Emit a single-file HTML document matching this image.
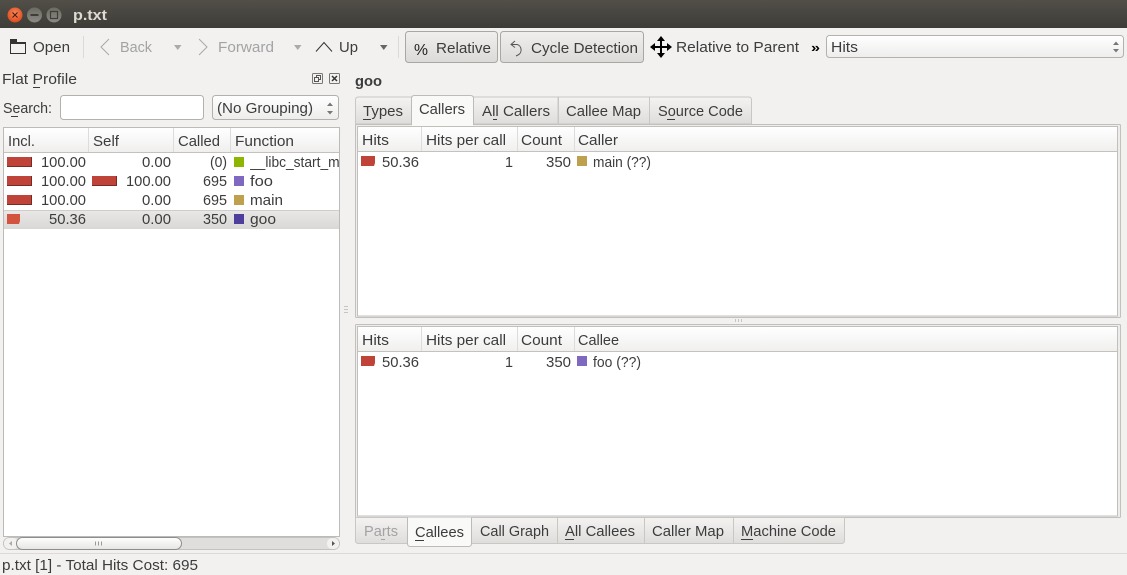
<!DOCTYPE html>
<html><head><meta charset="utf-8"><title>p.txt</title>
<style>
html,body{margin:0;padding:0;width:1127px;height:575px;overflow:hidden;background:#f2f1f0}
svg{display:block}
text{font-family:"Liberation Sans",sans-serif;font-size:15px;fill:#3c3c3c}
.g{fill:#a3a3a3}
.u{fill:#3c3c3c}
</style></head><body>
<svg width="1127" height="575" viewBox="0 0 1127 575" xmlns="http://www.w3.org/2000/svg">
<defs>
<linearGradient id="tb" x1="0" y1="0" x2="0" y2="1"><stop offset="0" stop-color="#514f48"/><stop offset="1" stop-color="#3d3c37"/></linearGradient>
<linearGradient id="hd" x1="0" y1="0" x2="0" y2="1"><stop offset="0" stop-color="#ffffff"/><stop offset="1" stop-color="#f0efee"/></linearGradient>
<linearGradient id="tab" x1="0" y1="0" x2="0" y2="1"><stop offset="0" stop-color="#f4f3f2"/><stop offset="1" stop-color="#dfdddb"/></linearGradient>
<linearGradient id="btn" x1="0" y1="0" x2="0" y2="1"><stop offset="0" stop-color="#f0efee"/><stop offset="1" stop-color="#dcdad8"/></linearGradient>
<linearGradient id="sel" x1="0" y1="0" x2="0" y2="1"><stop offset="0" stop-color="#e9e8e7"/><stop offset="1" stop-color="#d9d8d7"/></linearGradient>
<linearGradient id="thumb" x1="0" y1="0" x2="0" y2="1"><stop offset="0" stop-color="#ffffff"/><stop offset="1" stop-color="#e6e5e3"/></linearGradient>
<linearGradient id="cb" x1="0" y1="0" x2="0" y2="1"><stop offset="0" stop-color="#ffffff"/><stop offset="1" stop-color="#eeedec"/></linearGradient>
<linearGradient id="wb" x1="0" y1="0" x2="0" y2="1"><stop offset="0" stop-color="#6b6a63"/><stop offset="1" stop-color="#8c8b83"/></linearGradient>
<radialGradient id="cl" cx=".5" cy=".4" r=".6"><stop offset="0" stop-color="#f58a5e"/><stop offset="1" stop-color="#df4a1c"/></radialGradient>
</defs>

<!-- title bar -->
<rect x="0" y="0" width="1127" height="28" fill="url(#tb)"/>
<circle cx="15" cy="15" r="7.500" fill="url(#cl)"/>
<path d="M12.500 12.500l5 5M17.500 12.500l-5 5" stroke="#4a1d0c" stroke-width="1.100"/>
<circle cx="34.500" cy="15" r="7.500" fill="url(#wb)"/>
<rect x="30.500" y="14" width="8" height="2" fill="#3e3d38"/>
<circle cx="54" cy="15" r="7.500" fill="url(#wb)"/>
<rect x="50.500" y="11.500" width="7" height="7" fill="none" stroke="#3e3d38" stroke-width="1.200"/>
<text x="73" y="20" textLength="34" lengthAdjust="spacingAndGlyphs" style="fill:#dfdbd2;font-weight:bold">p.txt</text>

<!-- toolbar -->
<path d="M10.500 42.500v11h15v-11z" fill="none" stroke="#333" stroke-width="1"/>
<rect x="10" y="39" width="7" height="4" fill="#333"/>
<rect x="10" y="42" width="16" height="2" fill="#333"/>
<text x="33" y="52" textLength="37" lengthAdjust="spacingAndGlyphs">Open</text>
<rect x="83" y="36" width="1" height="22" fill="#dcdad7"/>
<path d="M109 39l-8 8 8 8" fill="none" stroke="#a8a8a8" stroke-width="1"/>
<text class="g" x="120" y="52" textLength="32" lengthAdjust="spacingAndGlyphs">Back</text>
<path d="M174 45h7.500l-3.750 5z" fill="#aaa"/>
<path d="M199 39l8 8-8 8" fill="none" stroke="#a8a8a8" stroke-width="1"/>
<text class="g" x="218" y="52" textLength="56" lengthAdjust="spacingAndGlyphs">Forward</text>
<path d="M294 45h7.500l-3.750 5z" fill="#aaa"/>
<path d="M316 51.500l8-9 8 9" fill="none" stroke="#333" stroke-width="1"/>
<text x="339" y="52" textLength="19" lengthAdjust="spacingAndGlyphs">Up</text>
<path d="M380 45h7.500l-3.750 5z" fill="#666"/>
<rect x="398" y="36" width="1" height="22" fill="#dcdad7"/>

<rect x="405.500" y="31.500" width="92" height="31" rx="3" fill="url(#btn)" stroke="#a9a7a3"/>
<text x="414" y="55" textLength="14" lengthAdjust="spacingAndGlyphs" style="fill:#222;font-size:16px">%</text>
<text x="436" y="53" textLength="55" lengthAdjust="spacingAndGlyphs">Relative</text>
<rect x="500.500" y="31.500" width="143" height="31" rx="3" fill="url(#btn)" stroke="#a9a7a3"/>
<path d="M515 41l-4 3.500 4 3M511.500 44.500h5.500a5 5.500 0 0 1 1 10.500l-2 1" fill="none" stroke="#555" stroke-width="1"/>
<text x="531" y="53" textLength="107" lengthAdjust="spacingAndGlyphs">Cycle Detection</text>

<path d="M661 40v14M654 47h14" stroke="#000" stroke-width="2"/>
<path d="M661 36l-4 5h8zM661 58l-4-5h8zM650 47l5-4v8zM672 47l-5-4v8z" fill="#000"/>
<text x="676" y="52" textLength="123" lengthAdjust="spacingAndGlyphs">Relative to Parent</text>
<text x="811" y="52" textLength="9" lengthAdjust="spacingAndGlyphs" style="fill:#000;font-weight:bold;font-size:13px">»</text>
<rect x="826.500" y="35.500" width="297" height="22" rx="3" fill="url(#cb)" stroke="#b3b1ad"/>
<text x="831" y="52" textLength="27" lengthAdjust="spacingAndGlyphs">Hits</text>
<path d="M1113 45l3-3.500 3 3.500zM1113 49l3 3.500 3-3.500z" fill="#777"/>

<!-- left dock -->
<text x="2" y="84" textLength="75" lengthAdjust="spacingAndGlyphs">Flat Profile</text>
<rect x="33" y="87" width="7" height="1" class="u"/>
<rect x="312.500" y="73.500" width="10" height="10" rx="1" fill="none" stroke="#777"/>
<path d="M316.500 77.500v-2h4v4h-2M314.500 77.500h4v4h-4z" fill="none" stroke="#555"/>
<rect x="329.500" y="73.500" width="10" height="10" rx="1" fill="none" stroke="#777"/>
<path d="M332 76l5 5M337 76l-5 5" stroke="#333" stroke-width="1.500"/>

<text x="3" y="113" textLength="49" lengthAdjust="spacingAndGlyphs">Search:</text>
<rect x="11" y="116" width="7" height="1" class="u"/>
<rect x="60.500" y="95.500" width="143" height="24" rx="3" fill="#fff" stroke="#b3b1ad"/>
<rect x="212.500" y="95.500" width="126" height="24" rx="3" fill="url(#cb)" stroke="#b3b1ad"/>
<text x="217" y="113" textLength="96" lengthAdjust="spacingAndGlyphs">(No Grouping)</text>
<path d="M327 106l3-3.500 3 3.500zM327 111l3 3.500 3-3.500z" fill="#777"/>

<!-- flat profile tree -->
<rect x="3.500" y="127.500" width="336" height="409" fill="#fff" stroke="#bdbbb7"/>
<rect x="4" y="128" width="335" height="24" fill="url(#hd)"/>
<rect x="4" y="152" width="335" height="1" fill="#c4c2be"/>
<rect x="88" y="128" width="1" height="24" fill="#dedcd9"/>
<rect x="173" y="128" width="1" height="24" fill="#dedcd9"/>
<rect x="230" y="128" width="1" height="24" fill="#dedcd9"/>
<text x="8" y="146" textLength="27" lengthAdjust="spacingAndGlyphs">Incl.</text>
<text x="93" y="146" textLength="26" lengthAdjust="spacingAndGlyphs">Self</text>
<text x="178" y="146" textLength="42" lengthAdjust="spacingAndGlyphs">Called</text>
<text x="235" y="146" textLength="59" lengthAdjust="spacingAndGlyphs">Function</text>

<rect x="4" y="210" width="335" height="19" fill="url(#sel)"/>
<rect x="4" y="210" width="335" height="1" fill="#cfcdcb"/>

<!-- bars -->
<g fill="#c0433a">
<rect x="7" y="157" width="25" height="10"/>
<rect x="7" y="176" width="25" height="10"/>
<rect x="92" y="176" width="25" height="10"/>
<rect x="7" y="195" width="25" height="10"/>
</g>
<g fill="#7a2a24">
<rect x="7" y="166" width="25" height="1"/><rect x="31" y="157" width="1" height="10"/>
<rect x="7" y="185" width="25" height="1"/><rect x="31" y="176" width="1" height="10"/>
<rect x="92" y="185" width="25" height="1"/><rect x="116" y="176" width="1" height="10"/>
<rect x="7" y="204" width="25" height="1"/><rect x="31" y="195" width="1" height="10"/>
</g>
<path d="M7 214h13v7l-1 3h-12z" fill="#d4533e"/>

<text x="41" y="167" textLength="45" lengthAdjust="spacingAndGlyphs">100.00</text>
<text x="142" y="167" textLength="29" lengthAdjust="spacingAndGlyphs">0.00</text>
<text x="210" y="167" textLength="17" lengthAdjust="spacingAndGlyphs" style="font-size:15px">(0)</text>
<rect x="234" y="157" width="10" height="10" fill="#8db600"/>
<svg x="250" y="150" width="89" height="24"><text x="0" y="17" textLength="108" lengthAdjust="spacingAndGlyphs">__libc_start_main</text></svg>

<text x="41" y="186" textLength="45" lengthAdjust="spacingAndGlyphs">100.00</text>
<text x="126" y="186" textLength="45" lengthAdjust="spacingAndGlyphs">100.00</text>
<text x="203" y="186" textLength="24" lengthAdjust="spacingAndGlyphs">695</text>
<rect x="234" y="176" width="10" height="10" fill="#7f68c0"/>
<text x="250" y="186" textLength="23" lengthAdjust="spacingAndGlyphs">foo</text>

<text x="41" y="205" textLength="45" lengthAdjust="spacingAndGlyphs">100.00</text>
<text x="142" y="205" textLength="29" lengthAdjust="spacingAndGlyphs">0.00</text>
<text x="203" y="205" textLength="24" lengthAdjust="spacingAndGlyphs">695</text>
<rect x="234" y="195" width="10" height="10" fill="#bfa04e"/>
<text x="250" y="205" textLength="33" lengthAdjust="spacingAndGlyphs">main</text>

<text x="49" y="224" textLength="37" lengthAdjust="spacingAndGlyphs">50.36</text>
<text x="142" y="224" textLength="29" lengthAdjust="spacingAndGlyphs">0.00</text>
<text x="203" y="224" textLength="24" lengthAdjust="spacingAndGlyphs">350</text>
<rect x="234" y="214" width="10" height="10" fill="#4f3f9c"/>
<text x="250" y="224" textLength="26" lengthAdjust="spacingAndGlyphs">goo</text>

<!-- horizontal scrollbar -->
<rect x="3.500" y="537.500" width="336" height="12" rx="6" fill="#dfdedc" stroke="#c4c2bf"/>
<rect x="327" y="538" width="12" height="11" rx="5" fill="#f2f1f0"/>
<rect x="4" y="538" width="14" height="11" rx="5" fill="#f2f1f0"/>
<rect x="16.500" y="537.500" width="165" height="12" rx="6" fill="url(#thumb)" stroke="#8f8d89"/>
<path d="M12 541v5l-3-2.500z" fill="#aaa"/>
<path d="M332 541v5l3-2.500z" fill="#555"/>
<path d="M95.500 541.500v4M98.500 541.500v4M101.500 541.500v4" stroke="#999"/>

<!-- splitter dots -->
<path d="M344 306.500h4M344 309.500h4M344 312.500h4" stroke="#c6c4c1"/>
<path d="M735.500 319v3M738.500 319v3M741.500 319v3" stroke="#c6c4c1"/>

<!-- right -->
<text x="355" y="86" textLength="27" lengthAdjust="spacingAndGlyphs" style="font-weight:bold">goo</text>

<!-- top tabs -->
<path d="M355.500 124v-24q0-3 3-3h53v27zM473.500 124v-27h84.500v27zM558.500 124v-27h91v27zM649.500 124v-27h99q3 0 3 3v24z" fill="url(#tab)" stroke="#c9c7c3"/>
<text x="363" y="116" textLength="40" lengthAdjust="spacingAndGlyphs">Types</text>
<rect x="363" y="119" width="8" height="1" class="u"/>
<text x="482" y="116" textLength="68" lengthAdjust="spacingAndGlyphs">All Callers</text>
<rect x="493" y="119" width="4" height="1" class="u"/>
<text x="566" y="116" textLength="75" lengthAdjust="spacingAndGlyphs">Callee Map</text>
<text x="658" y="116" textLength="85" lengthAdjust="spacingAndGlyphs">Source Code</text>
<rect x="667" y="119" width="8" height="1" class="u"/>

<!-- top panel -->
<rect x="355.500" y="124.500" width="765" height="193" fill="#eeedeb" stroke="#c2c0bc" rx="1"/>
<rect x="357.500" y="126.500" width="760" height="189.500" fill="#fff" stroke="#c2c0bc"/>
<rect x="358" y="127" width="759" height="24.500" fill="url(#hd)"/>
<rect x="358" y="151" width="759" height="1" fill="#c4c2be"/>
<rect x="421" y="127" width="1" height="24" fill="#dedcd9"/>
<rect x="517" y="127" width="1" height="24" fill="#dedcd9"/>
<rect x="574" y="127" width="1" height="24" fill="#dedcd9"/>
<text x="362" y="145" textLength="27" lengthAdjust="spacingAndGlyphs">Hits</text>
<text x="426" y="145" textLength="80" lengthAdjust="spacingAndGlyphs">Hits per call</text>
<text x="521" y="145" textLength="41" lengthAdjust="spacingAndGlyphs">Count</text>
<text x="578" y="145" textLength="40" lengthAdjust="spacingAndGlyphs">Caller</text>
<path d="M361 156h14v7l-1 3h-13z" fill="#c0433a"/>
<text x="382" y="167" textLength="37" lengthAdjust="spacingAndGlyphs">50.36</text>
<text x="505" y="167" textLength="8" lengthAdjust="spacingAndGlyphs">1</text>
<text x="546" y="167" textLength="25" lengthAdjust="spacingAndGlyphs">350</text>
<rect x="577" y="156" width="10" height="10" fill="#bfa04e"/>
<text x="593" y="167" textLength="58" lengthAdjust="spacingAndGlyphs">main (??)</text>

<!-- selected top tab -->
<path d="M411.500 124.500v-26q0-3 3-3h56q3 0 3 3v26" fill="#f9f9f8" stroke="#bdbbb7"/>
<rect x="412" y="123" width="61" height="3" fill="#f9f9f8"/>
<text x="419" y="114" textLength="46" lengthAdjust="spacingAndGlyphs">Callers</text>

<!-- bottom panel -->
<rect x="355.500" y="324.500" width="765" height="193" fill="#eeedeb" stroke="#c2c0bc" rx="1"/>
<rect x="357.500" y="326.500" width="760" height="189.500" fill="#fff" stroke="#c2c0bc"/>
<rect x="358" y="327" width="759" height="24.500" fill="url(#hd)"/>
<rect x="358" y="351" width="759" height="1" fill="#c4c2be"/>
<rect x="421" y="327" width="1" height="24" fill="#dedcd9"/>
<rect x="517" y="327" width="1" height="24" fill="#dedcd9"/>
<rect x="574" y="327" width="1" height="24" fill="#dedcd9"/>
<text x="362" y="345" textLength="27" lengthAdjust="spacingAndGlyphs">Hits</text>
<text x="426" y="345" textLength="80" lengthAdjust="spacingAndGlyphs">Hits per call</text>
<text x="521" y="345" textLength="41" lengthAdjust="spacingAndGlyphs">Count</text>
<text x="578" y="345" textLength="41" lengthAdjust="spacingAndGlyphs">Callee</text>
<path d="M361 356h14v7l-1 3h-13z" fill="#c0433a"/>
<text x="382" y="367" textLength="37" lengthAdjust="spacingAndGlyphs">50.36</text>
<text x="505" y="367" textLength="8" lengthAdjust="spacingAndGlyphs">1</text>
<text x="546" y="367" textLength="25" lengthAdjust="spacingAndGlyphs">350</text>
<rect x="577" y="356" width="10" height="10" fill="#7f68c0"/>
<text x="593" y="367" textLength="48" lengthAdjust="spacingAndGlyphs">foo (??)</text>

<!-- bottom tabs -->
<path d="M355.500 517.500v23q0 3 3 3h49v-26zM471.500 517.500v26h86v-26zM557.500 517.500v26h87v-26zM644.500 517.500v26h89v-26zM733.500 517.500v26h108q3 0 3-3v-23z" fill="url(#tab)" stroke="#c9c7c3"/>
<text class="g" x="364" y="536" textLength="34" lengthAdjust="spacingAndGlyphs">Parts</text>
<rect x="381" y="539" width="4" height="1" fill="#a3a3a3"/>
<text x="480" y="536" textLength="69" lengthAdjust="spacingAndGlyphs">Call Graph</text>
<text x="565" y="536" textLength="70" lengthAdjust="spacingAndGlyphs">All Callees</text>
<rect x="565" y="539" width="9" height="1" class="u"/>
<text x="652" y="536" textLength="72" lengthAdjust="spacingAndGlyphs">Caller Map</text>
<text x="741" y="536" textLength="95" lengthAdjust="spacingAndGlyphs">Machine Code</text>
<rect x="741" y="539" width="12" height="1" class="u"/>
<path d="M407.500 517.500v26q0 3 3 3h58q3 0 3-3v-26" fill="#f9f9f8" stroke="#bdbbb7"/>
<text x="415" y="537" textLength="49" lengthAdjust="spacingAndGlyphs">Callees</text>
<rect x="415" y="540" width="9" height="1" class="u"/>

<!-- status bar -->
<rect x="0" y="553" width="1127" height="1" fill="#dcdad6"/>
<text x="2" y="570" textLength="196" lengthAdjust="spacingAndGlyphs">p.txt [1] - Total Hits Cost: 695</text>
</svg>
</body></html>
